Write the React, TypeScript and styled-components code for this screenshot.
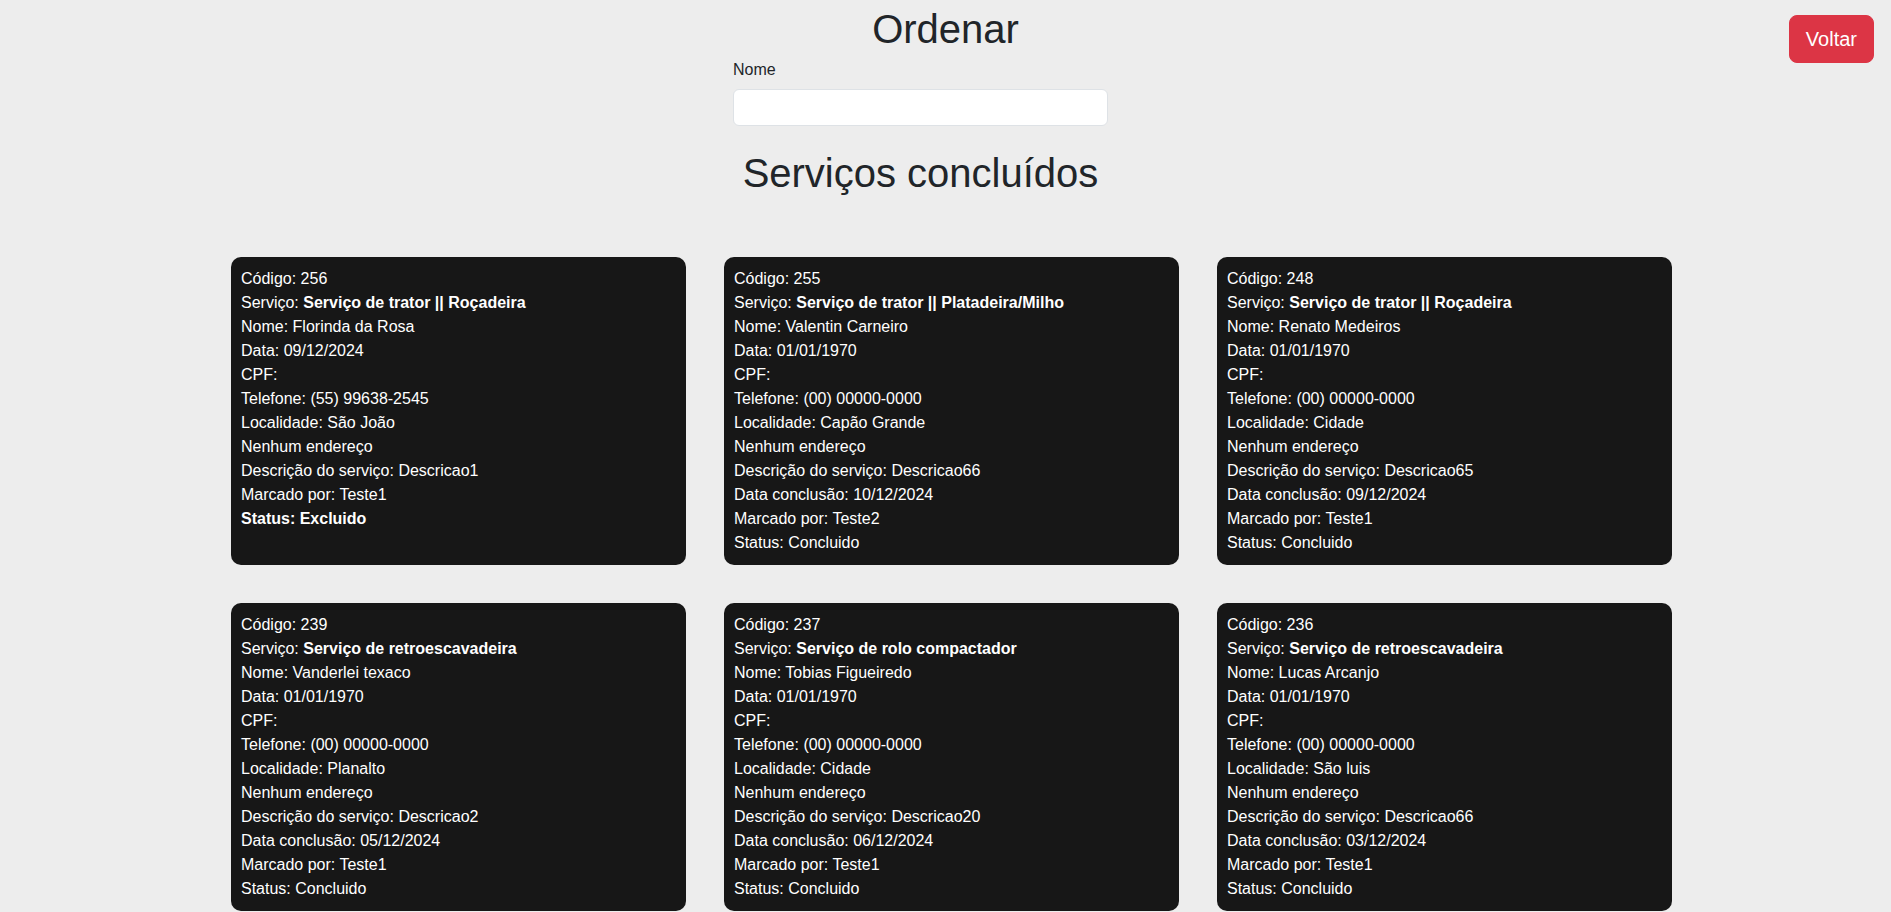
import React from "react";
import styled, { createGlobalStyle } from "styled-components";

const GlobalStyle = createGlobalStyle`
  html, body {
    margin: 0;
    padding: 0;
    background: #ededed;
    font-family: "Liberation Sans", Arial, sans-serif;
    color: #212529;
  }
  * { box-sizing: border-box; }
`;

const Page = styled.div`
  display: flex;
  flex-direction: column;
  padding-bottom: 40px;
`;

const Header = styled.header`
  display: grid;
  grid-template-columns: 1fr auto 1fr;
  grid-template-rows: 53px;
  align-items: start;
`;

const Title = styled.h1`
  grid-column: 2;
  margin: 5px 0 0;
  font-size: 40px;
  font-weight: 400;
  line-height: 48px;
  text-align: center;
`;

const BackButton = styled.button`
  grid-column: 3;
  justify-self: end;
  margin: 15px 17px 0 0;
  height: 48px;
  padding: 0 16px;
  border: 1px solid #dc3545;
  border-radius: 8px;
  background: #dc3545;
  color: #fff;
  font-family: inherit;
  font-size: 20px;
  line-height: 30px;
  cursor: pointer;
`;

const FilterSection = styled.section`
  display: flex;
  flex-direction: column;
  align-items: center;
  padding-right: 50px;
  margin-top: 5px;
`;

const Form = styled.div`
  width: 375px;
  display: flex;
  flex-direction: column;
`;

const Label = styled.label`
  font-size: 16px;
  line-height: 24px;
  margin-bottom: 7px;
`;

const Input = styled.input`
  height: 37px;
  width: 100%;
  border: 1px solid #dee2e6;
  border-radius: 6px;
  background: #fff;
  padding: 6px 12px;
  font-family: inherit;
  font-size: 16px;
  outline: none;
`;

const SectionTitle = styled.h2`
  margin: 23px 0 0;
  font-size: 40px;
  font-weight: 400;
  line-height: 48px;
  text-align: center;
  width: 375px;
`;

const Grid = styled.div`
  display: grid;
  grid-template-columns: repeat(3, 455px);
  column-gap: 38px;
  row-gap: 38px;
  justify-content: center;
  padding-left: 12px;
  margin-top: 60px;
`;

const Card = styled.div`
  background: #171717;
  color: #fff;
  border-radius: 10px;
  padding: 10px;
  font-size: 16px;
  line-height: 24px;
`;

const Line = styled.div<{ $bold?: boolean }>`
  font-weight: ${(p) => (p.$bold ? 700 : 400)};
`;

const Strong = styled.b`
  font-weight: 700;
`;

type Service = {
  codigo: number;
  servico: string;
  nome: string;
  data: string;
  telefone: string;
  localidade: string;
  descricao: string;
  conclusao?: string;
  marcado: string;
  status: string;
  excluido?: boolean;
};

const services: Service[] = [
  {
    codigo: 256,
    servico: "Serviço de trator || Roçadeira",
    nome: "Florinda da Rosa",
    data: "09/12/2024",
    telefone: "(55) 99638-2545",
    localidade: "São João",
    descricao: "Descricao1",
    marcado: "Teste1",
    status: "Excluido",
    excluido: true,
  },
  {
    codigo: 255,
    servico: "Serviço de trator || Platadeira/Milho",
    nome: "Valentin Carneiro",
    data: "01/01/1970",
    telefone: "(00) 00000-0000",
    localidade: "Capão Grande",
    descricao: "Descricao66",
    conclusao: "10/12/2024",
    marcado: "Teste2",
    status: "Concluido",
  },
  {
    codigo: 248,
    servico: "Serviço de trator || Roçadeira",
    nome: "Renato Medeiros",
    data: "01/01/1970",
    telefone: "(00) 00000-0000",
    localidade: "Cidade",
    descricao: "Descricao65",
    conclusao: "09/12/2024",
    marcado: "Teste1",
    status: "Concluido",
  },
  {
    codigo: 239,
    servico: "Serviço de retroescavadeira",
    nome: "Vanderlei texaco",
    data: "01/01/1970",
    telefone: "(00) 00000-0000",
    localidade: "Planalto",
    descricao: "Descricao2",
    conclusao: "05/12/2024",
    marcado: "Teste1",
    status: "Concluido",
  },
  {
    codigo: 237,
    servico: "Serviço de rolo compactador",
    nome: "Tobias Figueiredo",
    data: "01/01/1970",
    telefone: "(00) 00000-0000",
    localidade: "Cidade",
    descricao: "Descricao20",
    conclusao: "06/12/2024",
    marcado: "Teste1",
    status: "Concluido",
  },
  {
    codigo: 236,
    servico: "Serviço de retroescavadeira",
    nome: "Lucas Arcanjo",
    data: "01/01/1970",
    telefone: "(00) 00000-0000",
    localidade: "São luis",
    descricao: "Descricao66",
    conclusao: "03/12/2024",
    marcado: "Teste1",
    status: "Concluido",
  },
];

export default function App() {
  return (
    <Page>
      <GlobalStyle />
      <Header>
        <Title>Ordenar</Title>
        <BackButton>Voltar</BackButton>
      </Header>
      <FilterSection>
        <Form>
          <Label htmlFor="nome">Nome</Label>
          <Input id="nome" type="text" />
        </Form>
        <SectionTitle>Serviços concluídos</SectionTitle>
      </FilterSection>
      <Grid>
        {services.map((s) => (
          <Card key={s.codigo}>
            <Line>Código: {s.codigo}</Line>
            <Line>
              Serviço: <Strong>{s.servico}</Strong>
            </Line>
            <Line>Nome: {s.nome}</Line>
            <Line>Data: {s.data}</Line>
            <Line>CPF: </Line>
            <Line>Telefone: {s.telefone}</Line>
            <Line>Localidade: {s.localidade}</Line>
            <Line>Nenhum endereço</Line>
            <Line>Descrição do serviço: {s.descricao}</Line>
            {s.conclusao && <Line>Data conclusão: {s.conclusao}</Line>}
            <Line>Marcado por: {s.marcado}</Line>
            <Line $bold={s.excluido}>Status: {s.status}</Line>
          </Card>
        ))}
      </Grid>
    </Page>
  );
}
